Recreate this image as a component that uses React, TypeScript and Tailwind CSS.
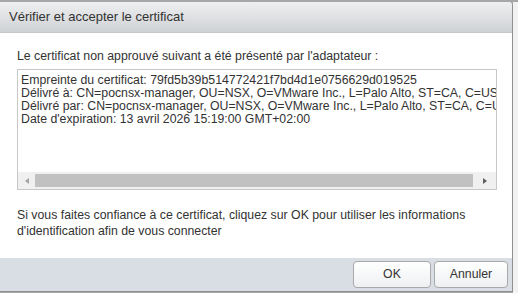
export default function App() {
  const lines = [
    'Empreinte du certificat: 79fd5b39b514772421f7bd4d1e0756629d019525',
    'Délivré à: CN=pocnsx-manager, OU=NSX, O=VMware Inc., L=Palo Alto, ST=CA, C=US',
    'Délivré par: CN=pocnsx-manager, OU=NSX, O=VMware Inc., L=Palo Alto, ST=CA, C=US',
    "Date d'expiration: 13 avril 2026 15:19:00 GMT+02:00",
  ]

  return (
    <div className="w-[518px] h-[293px] bg-[#a7a7a7] pt-[2px] overflow-hidden flex font-['Liberation_Sans',Arial,sans-serif] text-[#333]">
      {/* Dialog */}
      <div className="w-[513px] h-[290px] flex flex-col bg-white border-r border-b border-[#8f8f8f] rounded-tr-[4px] overflow-hidden">
        {/* Title bar */}
        <div className="h-[31px] shrink-0 flex items-center pl-[9px] bg-gradient-to-b from-[#eeeff0] to-[#cfd2d5] border-b border-[#c4c7ca]">
          <span className="text-[13px] text-[#333]">Vérifier et accepter le certificat</span>
        </div>

        {/* Body */}
        <div className="flex-1 flex flex-col px-[17px] pt-[16px]">
          <p className="text-[12.3px] leading-[15px]">
            Le certificat non approuvé suivant a été présenté par l'adaptateur :
          </p>
          <div className="mt-[5px] w-[480px] h-[121px] border border-[#c8c8c8] flex flex-col">
            <div className="flex-1 overflow-hidden pl-[3px] pt-[4px]">
              {lines.map(l => (
                <div key={l} className="text-[12.3px] leading-[13px] whitespace-nowrap">{l}</div>
              ))}
            </div>
            {/* Horizontal scrollbar */}
            <div className="h-[17px] bg-[#f0f0f0] flex items-center">
              <div className="w-[17px] h-full flex items-center justify-center">
                <div className="w-0 h-0 border-y-[3px] border-y-transparent border-r-[4px] border-r-[#a3a3a3]" />
              </div>
              <div className="flex-1 h-[13px] bg-[#c1c1c1]" />
              <div className="w-[23px] h-full flex items-center justify-center">
                <div className="w-0 h-0 border-y-[3px] border-y-transparent border-l-[4px] border-l-[#606060]" />
              </div>
            </div>
          </div>
          <p className="mt-[17px] text-[12.3px] leading-[16px]">
            Si vous faites confiance à ce certificat, cliquez sur OK pour utiliser les informations
            <br />
            d'identification afin de vous connecter
          </p>
        </div>

        {/* Footer */}
        <div className="h-[33px] shrink-0 bg-[#d8dee4] flex items-center justify-end gap-[3px] pr-[4px]">
          <button className="w-[78px] h-[27px] rounded-[4px] border border-[#a9a9a9] bg-gradient-to-b from-white to-[#eef0f2] text-[12.3px] text-[#333]">
            OK
          </button>
          <button className="w-[74px] h-[27px] rounded-[4px] border border-[#a9a9a9] bg-gradient-to-b from-white to-[#eef0f2] text-[12.3px] text-[#333]">
            Annuler
          </button>
        </div>
      </div>
      <div className="flex-1 bg-[#f2f2f2]" />
    </div>
  )
}
